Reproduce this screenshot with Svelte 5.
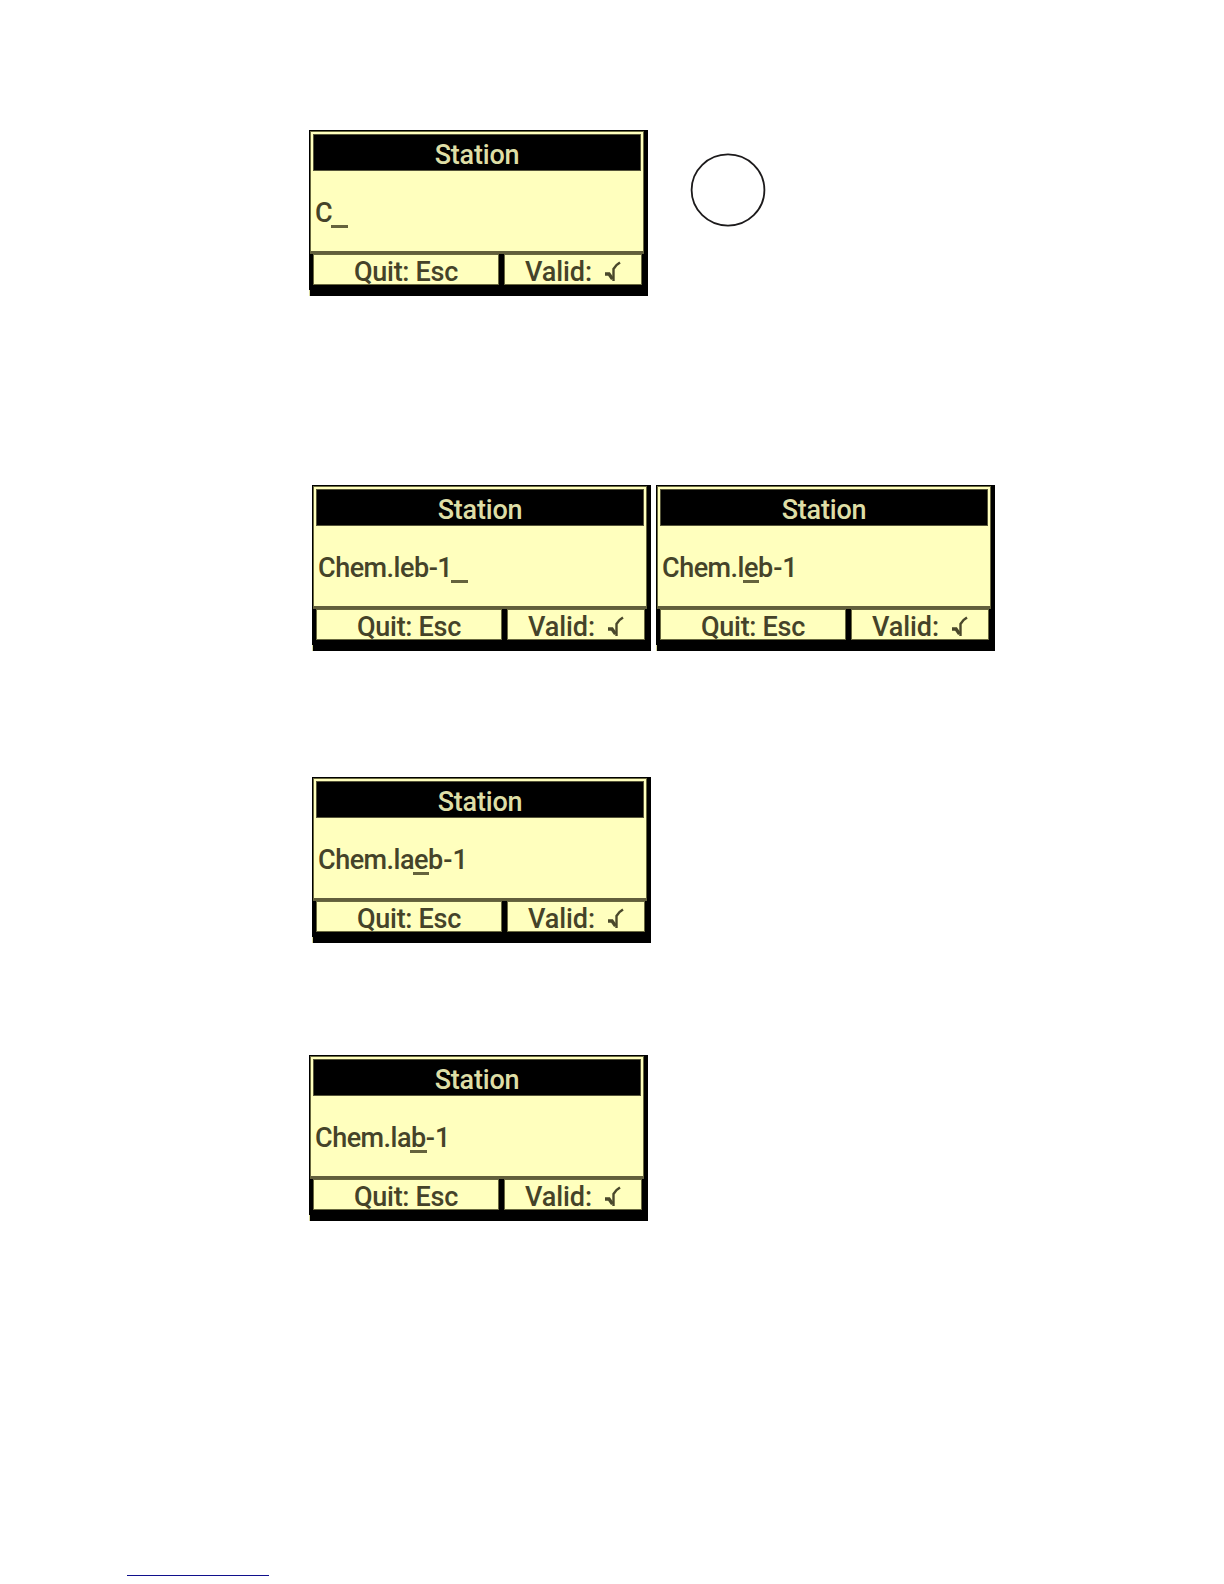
<script lang="ts">
  interface Screen {
    before: string;
    cursor: string;
    after: string;
  }

  const steps: { name: string; screens: Screen[]; ring?: boolean }[] = [
    { name: 'first', screens: [{ before: 'C', cursor: '', after: '' }], ring: true },
    {
      name: 'second',
      screens: [
        { before: 'Chem.leb-1', cursor: '', after: '' },
        { before: 'Chem.l', cursor: 'e', after: 'b-1' }
      ]
    },
    { name: 'third', screens: [{ before: 'Chem.la', cursor: 'e', after: 'b-1' }] },
    { name: 'fourth', screens: [{ before: 'Chem.la', cursor: 'b', after: '-1' }] }
  ];
</script>

{#snippet lcd(screen: Screen)}
  <section class="lcd">
    <div class="panel">
      <header class="title">Station</header>
      <div class="entry">
        <span>{screen.before}</span><span class="cursor" class:blank={!screen.cursor}>{screen.cursor}</span><span class="after">{screen.after}</span>
      </div>
    </div>
    <footer class="keys">
      <div class="key quit">Quit: Esc</div>
      <div class="key valid">
        <span>Valid:</span>
        <svg class="check" viewBox="0 0 18 22" width="18" height="22">
          <path d="M17 1.5L13.5 4L10.5 8V20" />
          <path class="thick" d="M2 13H6L9.5 18" />
        </svg>
      </div>
    </footer>
  </section>
{/snippet}

<main class="page">
  {#each steps as step}
    <div class="row {step.name}">
      {#each step.screens as screen}
        {@render lcd(screen)}
      {/each}
      {#if step.ring}
        <svg class="ring" viewBox="0 0 76 74" width="76" height="74">
          <ellipse cx="38" cy="37" rx="36.4" ry="35.6" />
        </svg>
      {/if}
    </div>
  {/each}
  <div class="link-line"></div>
</main>

<style>
  :global(body) {
    margin: 0;
    background: #fff;
  }

  .page {
    box-sizing: border-box;
    width: 1224px;
    height: 1584px;
    padding-top: 130px;
    overflow: hidden;
    display: flex;
    flex-direction: column;
    font-family: Roboto, sans-serif;
    font-size: 27px;
    font-weight: 500;
    color: #454329;
  }

  .row {
    display: flex;
    flex: none;
    height: 166px;
    padding-left: 312px;
    gap: 5px;
  }

  .first,
  .fourth {
    padding-left: 309px;
  }

  .second {
    margin-top: 189px;
  }

  .third {
    margin-top: 126px;
  }

  .fourth {
    margin-top: 112px;
  }

  .lcd {
    box-sizing: border-box;
    width: 339px;
    height: 166px;
    padding: 1px 4px 0 1px;
    background: linear-gradient(#d9d9a0, #d9d9a0) 0 100% / 1px 6px no-repeat #000;
    display: flex;
    flex-direction: column;
  }

  .panel {
    box-sizing: border-box;
    height: 123px;
    padding: 2px 1px 0;
    border: 1px solid #69683f;
    border-bottom: 3px solid #625f3c;
    background: #ffffbe;
    display: flex;
    flex-direction: column;
  }

  .title {
    box-sizing: border-box;
    height: 37px;
    margin: 0 1px;
    border: 1px solid #56553a;
    background: #000;
    color: #dedea6;
    line-height: 40px;
    text-align: center;
    letter-spacing: -0.2px;
  }

  .entry {
    flex: 1;
    padding: 4px 0 0 3px;
    display: flex;
    align-items: center;
    line-height: 32px;
    letter-spacing: -0.5px;
    white-space: pre;
  }

  .cursor {
    position: relative;
  }

  .cursor.blank {
    width: 15px;
    height: 32px;
  }

  .cursor::after {
    content: '';
    position: absolute;
    left: -1px;
    right: -1px;
    bottom: 1px;
    height: 3px;
    background: #65633d;
  }

  .after {
    letter-spacing: 0;
  }

  .keys {
    display: flex;
    gap: 5px;
    height: 31px;
    padding: 0 2px 0 3px;
  }

  .key {
    box-sizing: border-box;
    height: 31px;
    border: 1px solid #69683f;
    background: #ffffbe;
    display: flex;
    align-items: center;
    justify-content: center;
    line-height: 30px;
    padding-top: 4px;
    white-space: pre;
  }

  .quit {
    width: 186px;
    letter-spacing: -0.3px;
  }

  .valid {
    flex: 1;
    gap: 11px;
    letter-spacing: -0.1px;
  }

  .check path {
    fill: none;
    stroke: #4a482b;
    stroke-width: 2.4;
  }

  .check .thick {
    stroke-width: 3.4;
  }

  .ring {
    margin: 23px 0 0 37px;
  }

  .ring ellipse {
    fill: none;
    stroke: #1c1a1b;
    stroke-width: 1.8;
  }

  .link-line {
    flex: none;
    width: 142px;
    height: 1px;
    margin: 354px 0 0 127px;
    background: #10108c;
  }
</style>
